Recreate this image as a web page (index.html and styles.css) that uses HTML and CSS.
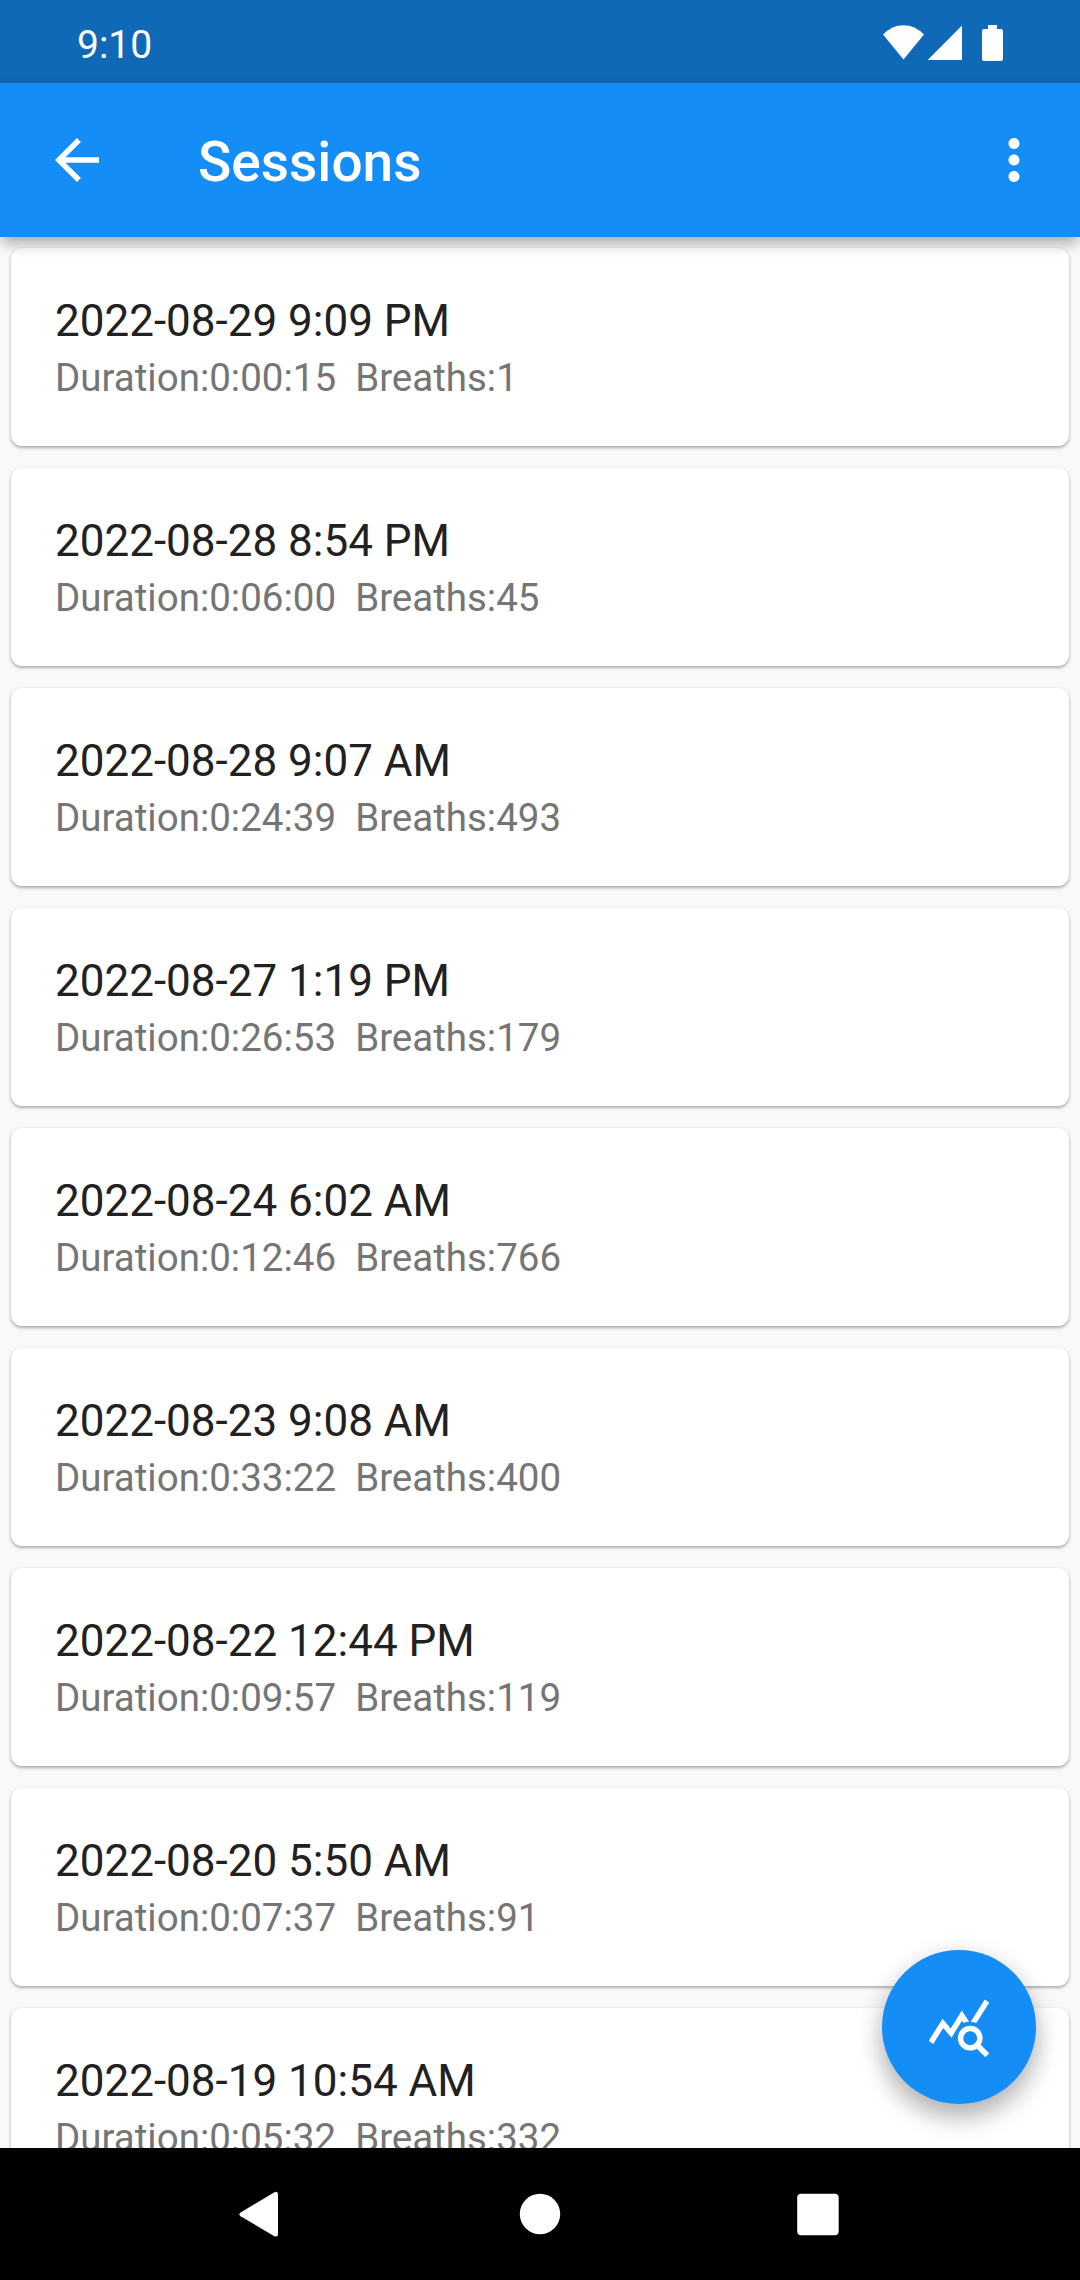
FILE: index.html
```html
<!DOCTYPE html>
<html lang="en">
<head>
<meta charset="utf-8">
<title>Sessions</title>
<link rel="stylesheet" href="styles.css">
</head>
<body>
<div class="screen">
  <div class="status-bar">
    <span class="clock">9:10</span>
    <svg class="status-icons" width="122" height="38" viewBox="882 24 122 38" aria-hidden="true">
      <path d="M903.5 59.5L883 34.6Q892 25.2 903.5 25.2T924 34.6Z"/>
      <path d="M927.7 60H962V25.6Z"/>
      <path d="M988 25h9v4h4q2 0 2 2v28q0 2-2 2h-17q-2 0-2-2V31q0-2 2-2h4z"/>
    </svg>
  </div>
  <header class="app-bar">
    <svg class="icon" viewBox="0 0 24 24" aria-label="Back"><path d="M20 11H7.83l5.59-5.59L12 4l-8 8 8 8 1.41-1.41L7.83 13H20v-2z"/></svg>
    <h1 class="app-title">Sessions</h1>
    <svg class="icon" viewBox="0 0 24 24" aria-label="More"><path d="M12 8c1.1 0 2-.9 2-2s-.9-2-2-2-2 .9-2 2 .9 2 2 2zm0 2c-1.1 0-2 .9-2 2s.9 2 2 2 2-.9 2-2-.9-2-2-2zm0 6c-1.1 0-2 .9-2 2s.9 2 2 2 2-.9 2-2-.9-2-2-2z"/></svg>
  </header>
  <main class="sessions">
    <article class="card"><h2 class="date">2022-08-29 9:09 PM</h2><p class="detail">Duration:0:00:15  Breaths:1</p></article>
    <article class="card"><h2 class="date">2022-08-28 8:54 PM</h2><p class="detail">Duration:0:06:00  Breaths:45</p></article>
    <article class="card"><h2 class="date">2022-08-28 9:07 AM</h2><p class="detail">Duration:0:24:39  Breaths:493</p></article>
    <article class="card"><h2 class="date">2022-08-27 1:19 PM</h2><p class="detail">Duration:0:26:53  Breaths:179</p></article>
    <article class="card"><h2 class="date">2022-08-24 6:02 AM</h2><p class="detail">Duration:0:12:46  Breaths:766</p></article>
    <article class="card"><h2 class="date">2022-08-23 9:08 AM</h2><p class="detail">Duration:0:33:22  Breaths:400</p></article>
    <article class="card"><h2 class="date">2022-08-22 12:44 PM</h2><p class="detail">Duration:0:09:57  Breaths:119</p></article>
    <article class="card"><h2 class="date">2022-08-20 5:50 AM</h2><p class="detail">Duration:0:07:37  Breaths:91</p></article>
    <article class="card"><h2 class="date">2022-08-19 10:54 AM</h2><p class="detail">Duration:0:05:32  Breaths:332</p></article>
  </main>
  <div class="fab">
    <svg class="icon" viewBox="0 0 24 24" aria-label="Statistics"><path d="M19.88 18.47c.44-.7.7-1.51.7-2.39 0-2.49-2.01-4.5-4.5-4.5s-4.5 2.01-4.5 4.5 2.01 4.5 4.49 4.5c.88 0 1.7-.26 2.39-.7L21.58 23 23 21.58l-3.12-3.11zm-3.8.11c-1.38 0-2.5-1.12-2.5-2.5s1.12-2.5 2.5-2.5 2.5 1.12 2.5 2.5-1.12 2.5-2.5 2.5zm-.36-8.5c-.74.02-1.45.18-2.1.45l-.55-.83-3.8 6.18-3.01-3.52-3.63 5.81L1 17l5-8 3 3.5L13 6l2.72 4.08zm2.59.5c-.64-.28-1.33-.45-2.05-.49L21.38 2 23 3.18l-4.69 7.4z"/></svg>
  </div>
  <nav class="nav-bar">
    <svg class="nav-icon" viewBox="0 0 46 46" aria-label="Back"><path d="M35 1.4Q39 -.4 39 3.5V42.8Q39 46.8 35 45L1.6 25.2Q-.8 23.3 1.6 21.4Z"/></svg>
    <svg class="nav-icon" viewBox="0 0 46 46" aria-label="Home"><circle cx="23" cy="23" r="20.2"/></svg>
    <svg class="nav-icon" viewBox="0 0 46 46" aria-label="Overview"><rect x="2.2" y="2.8" width="41.5" height="41.5" rx="4"/></svg>
  </nav>
</div>
</body>
</html>
```
FILE: styles.css
```css
* { box-sizing: border-box; }

body {
  margin: 0;
  font-family: Roboto, "Noto Sans", sans-serif;
}

.screen {
  position: relative;
  display: flex;
  flex-direction: column;
  width: 1080px;
  height: 2280px;
  overflow: hidden;
  background: #f9f9f9;
}

.status-bar {
  display: flex;
  flex: none;
  justify-content: space-between;
  align-items: flex-start;
  height: 83px;
  padding: 24px 76px 0 77px;
  background: #1069b7;
  color: #fff;
}

.clock {
  font-size: 39px;
  line-height: 43px;
}

.status-icons { fill: #fff; }

.app-bar {
  display: flex;
  flex: none;
  align-items: center;
  height: 154px;
  padding: 0 33px 0 44px;
  background: #158df7;
  color: #fff;
  box-shadow: 0 10px 14px -3px rgba(0, 0, 0, .22), 0 5px 12px rgba(0, 0, 0, .12);
  z-index: 1;
}

.icon {
  flex: none;
  width: 66px;
  height: 66px;
  fill: #fff;
}

.app-title {
  flex: 1;
  margin: 0 0 0 88px;
  padding-top: 4px;
  font-size: 55px;
  font-weight: 500;
  line-height: 64px;
}

.sessions {
  display: flex;
  flex: 1;
  flex-direction: column;
  gap: 22px;
  min-height: 0;
  padding: 11px 11px 0;
  overflow: hidden;
}

.card {
  flex: none;
  height: 198px;
  padding: 47px 44px 0;
  border-radius: 11px;
  background: #fff;
  box-shadow: 0 2px 3px rgba(0, 0, 0, .24), 0 1px 4px rgba(0, 0, 0, .12);
}

.date {
  margin: 0;
  color: #212121;
  font-size: 44px;
  font-weight: 400;
  line-height: 52px;
}

.detail {
  margin: 8px 0 0;
  color: #757575;
  font-size: 38.5px;
  line-height: 46px;
  white-space: pre;
}

.fab {
  position: absolute;
  right: 44px;
  bottom: 176px;
  display: flex;
  align-items: center;
  justify-content: center;
  width: 154px;
  height: 154px;
  border-radius: 50%;
  background: #158df7;
  box-shadow: 0 14px 24px rgba(0, 0, 0, .25), 0 4px 26px rgba(0, 0, 0, .1);
}

.nav-bar {
  display: flex;
  flex: none;
  align-items: center;
  justify-content: center;
  gap: 232px;
  height: 132px;
  background: #000;
  z-index: 2;
}

.nav-icon {
  width: 46px;
  height: 46px;
  fill: #fff;
}
```
